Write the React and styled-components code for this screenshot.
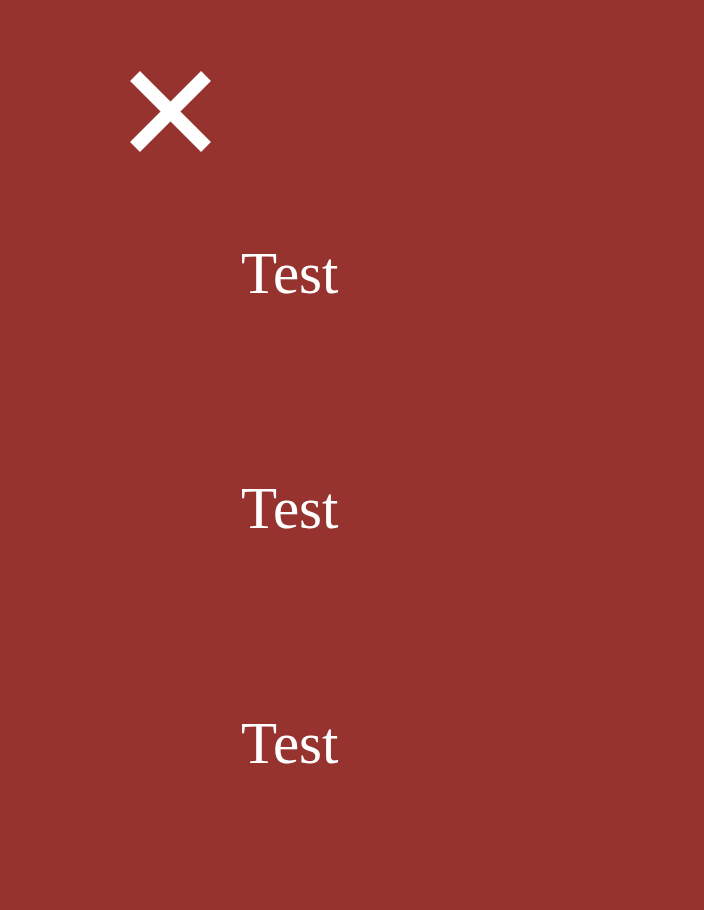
import React from 'react';
import styled, { createGlobalStyle } from 'styled-components';

const GlobalStyle = createGlobalStyle`
    html, body {
        margin: 0;
        padding: 0;
        background-color: #97332f;
    }
`

const Overlay = styled.nav`
    min-height: 910px;
    box-sizing: border-box;
    background-color: #97332f;
    padding: 71px 0 0 130px;
    font-family: "Liberation Serif", "Times New Roman", serif;
    color: #ffffff;
`
const CloseButton = styled.button`
    display: block;
    width: 81px;
    height: 81px;
    padding: 0;
    border: none;
    background: transparent;
    cursor: pointer;
`
const Menu = styled.ul`
    list-style: none;
    margin: 92px 0 0 111px;
    padding: 0;
    display: flex;
    flex-direction: column;
    gap: 176px;
`
const MenuItem = styled.li`
    font-size: 59px;
    line-height: 1;
`

const CloseIcon = () => (
    <svg width="81" height="81" viewBox="0 0 81 81">
        <path d="M5 5 L76 76 M76 5 L5 76" stroke="#fff" strokeWidth="14" fill="none" />
    </svg>
)

const App = () => {
    const links = ['Test', 'Test', 'Test'];

    return (
        <Overlay>
            <GlobalStyle />
            <CloseButton aria-label="close">
                <CloseIcon />
            </CloseButton>
            <Menu>
                {links.map((l, i) => <MenuItem key={i}>{l}</MenuItem>)}
            </Menu>
        </Overlay>
    )
}

export default App;
